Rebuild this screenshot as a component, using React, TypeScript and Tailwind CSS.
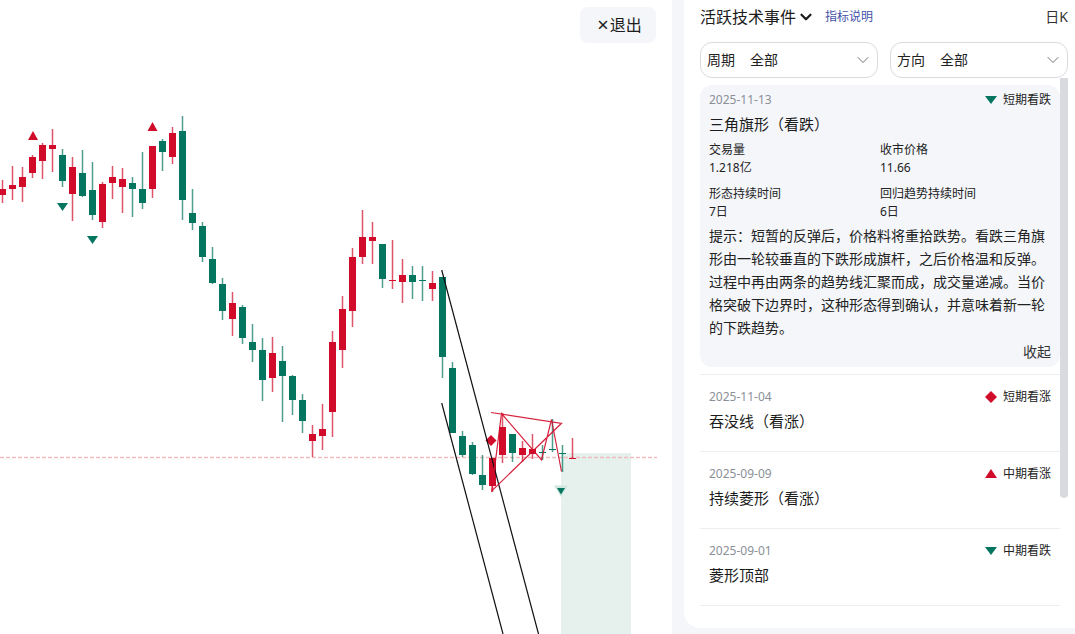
import React from 'react';
import { ChevronDown } from 'lucide-react';

const RED = '#d00c2a';
const GREEN = '#04765f';

// [wickTop, wickBottom, bodyTop, bodyBottom, up], one bar every 10px
const bars: [number, number, number, number, number][] = [
  [180, 203, 189, 195, 1], [166, 200, 185, 189, 1], [167, 202, 177, 187, 1], [155, 178, 157, 173, 1],
  [143, 179, 145, 161, 1], [129, 172, 145, 149, 1], [149, 187, 155, 181, 0], [157, 221, 167, 194, 1],
  [150, 197, 173, 196, 0], [162, 220, 190, 215, 0], [182, 228, 184, 222, 1], [166, 199, 177, 183, 1],
  [168, 213, 179, 187, 1], [177, 217, 183, 189, 0], [152, 209, 189, 203, 0], [146, 198, 146, 189, 1],
  [139, 171, 141, 152, 0], [127, 164, 133, 157, 1], [116, 220, 131, 200, 0], [189, 230, 213, 223, 0],
  [222, 262, 226, 257, 0], [247, 284, 259, 283, 0], [278, 320, 284, 311, 0], [292, 336, 303, 319, 1],
  [305, 344, 307, 338, 0], [324, 362, 342, 350, 0], [338, 401, 350, 380, 0], [337, 392, 353, 378, 1],
  [346, 422, 361, 376, 0], [375, 415, 376, 400, 0], [394, 433, 400, 421, 0], [425, 457, 434, 441, 1],
  [404, 450, 429, 436, 1], [331, 437, 342, 412, 1], [296, 368, 309, 350, 1], [248, 327, 257, 311, 1],
  [210, 264, 237, 257, 1], [222, 264, 237, 241, 1], [244, 288, 244, 279, 0], [240, 289, 280, 281, 1],
  [259, 303, 275, 282, 1], [266, 299, 275, 282, 0], [266, 301, 280, 281, 0], [271, 301, 283, 289, 1],
  [277, 378, 277, 357, 0], [362, 433, 368, 433, 0], [431, 457, 436, 455, 0], [442, 475, 445, 474, 0],
  [455, 490, 475, 485, 0], [458, 492, 458, 486, 1], [413, 463, 427, 455, 1], [434, 462, 434, 453, 0],
  [441, 462, 448, 455, 1], [434, 459, 449, 454, 1], [445, 460, 452, 453, 0], [419, 452, 449, 450, 0],
  [445, 472, 453, 454, 0], [438, 458, 458, 459, 1],
];

const Chart = () => (
  <svg width="672" height="634" viewBox="0 0 672 634" className="block">
    <rect x="561" y="453" width="70" height="181" fill="#e6f1ee" />
    <line x1="0" y1="457.5" x2="657" y2="457.5" stroke="#f0bcc0" strokeWidth="1.3" strokeDasharray="4 2" />
    {bars.map(([wt, wb, bt, bb, up], i) => {
      const x = 2.5 + i * 10;
      const color = up ? RED : GREEN;
      return (
        <g key={i} fill={color}>
          <rect x={x - 0.75} y={wt} width="1.5" height={wb - wt} opacity="0.7" />
          <rect x={x - 3.5} y={bt} width="7" height={bb - bt} />
        </g>
      );
    })}
    <polygon points="33,131 38,140 28,140" fill={RED} />
    <polygon points="152.5,122 157.5,131 147.5,131" fill={RED} />
    <polygon points="57,203 68,203 62.5,211" fill={GREEN} />
    <polygon points="87,236 98,236 92.5,244" fill={GREEN} />
    <polygon points="491,435 496.5,440.5 491,446 485.5,440.5" fill={RED} />
    <polygon points="554,485.5 568,485.5 561,497" fill="#cfe6e0" />
    <polygon points="557,488 565,488 561,494.5" fill={GREEN} />
    <line x1="441.7" y1="270" x2="538.5" y2="634" stroke="#111" strokeWidth="1.2" />
    <line x1="441.7" y1="403" x2="503" y2="634" stroke="#111" strokeWidth="1.2" />
    <polyline
      points="491,412.5 561.5,423.3 491.7,491 501.5,413.5 541.5,460 551.5,419.5 561.5,471.5"
      fill="none"
      stroke={RED}
      strokeOpacity="0.9"
      strokeWidth="1.2"
    />
  </svg>
);

const TagIcon = ({ kind }: { kind: 'down' | 'up' | 'diamond' }) => (
  <svg width="12" height="12" viewBox="0 0 12 12" className="shrink-0">
    {kind === 'down' && <polygon points="0,2 12,2 6,10" fill={GREEN} />}
    {kind === 'up' && <polygon points="6,1 12,10 0,10" fill={RED} />}
    {kind === 'diamond' && <polygon points="6,0 12,6 6,12 0,6" fill={RED} />}
  </svg>
);

const EventHead = ({ date, tag, kind }: { date: string; tag: string; kind: 'down' | 'up' | 'diamond' }) => (
  <div className="flex h-[18px] items-center justify-between text-xs leading-[18px]">
    <span className="text-[#8b8f97]">{date}</span>
    <span className="flex items-center gap-[6px] text-[#222]">
      <TagIcon kind={kind} />
      {tag}
    </span>
  </div>
);

const Stat = ({ label, value }: { label: string; value: string }) => (
  <div className="text-xs leading-[18px] text-[#222]">
    <div>{label}</div>
    <div>{value}</div>
  </div>
);

const Picker = ({ label }: { label: string }) => (
  <div className="flex h-9 flex-1 items-center justify-between rounded-xl border border-[#d9dbe0] pl-[6px] pr-1 text-sm text-[#222]">
    <span className="flex gap-[15px]">
      <span>{label}</span>
      <span>全部</span>
    </span>
    <ChevronDown size={20} strokeWidth={1} color="#555" />
  </div>
);

const rows: { date: string; tag: string; kind: 'down' | 'up' | 'diamond'; title: string }[] = [
  { date: '2025-11-04', tag: '短期看涨', kind: 'diamond', title: '吞没线（看涨）' },
  { date: '2025-09-09', tag: '中期看涨', kind: 'up', title: '持续菱形（看涨）' },
  { date: '2025-09-01', tag: '中期看跌', kind: 'down', title: '菱形顶部' },
];

export default function App() {
  return (
    <div
      className="flex h-[634px] w-[1075px] overflow-hidden bg-white text-[#1c1c1c]"
      style={{ fontFamily: '"Noto Sans", "Noto Sans CJK SC", sans-serif' }}
    >
      <div className="relative w-[672px] shrink-0">
        <Chart />
        <button className="absolute left-[580px] top-[7px] flex h-9 w-[76px] items-center justify-center rounded-lg bg-[#f4f6fa] pl-[3px] text-base">
          <span className="mr-px text-xl leading-none">×</span>
          退出
        </button>
      </div>

      <div className="flex-1 bg-[#f4f6fa] pb-[6px] pl-3">
        <div className="flex h-full flex-col overflow-hidden rounded-bl-2xl bg-white pl-4 pr-[7px]">
          <div className="mb-2 flex h-[34px] items-center justify-between">
            <div className="flex items-center">
              <span className="text-base">活跃技术事件</span>
              <ChevronDown size={18} strokeWidth={3} className="ml-px" />
              <span className="ml-[10px] text-xs text-[#3f51a8]">指标说明</span>
            </div>
            <span className="text-sm text-[#333]">日K</span>
          </div>

          <div className="flex gap-3">
            <Picker label="周期" />
            <Picker label="方向" />
          </div>

          <div className="flex min-h-0 flex-1">
            <div className="min-w-0 flex-1 overflow-hidden">
              <div className="border-b border-[#eceef0] py-[7px]">
                <div className="rounded-xl bg-[#f4f6fa] px-[9px] pb-[5px] pt-[6px]">
                  <EventHead date="2025-11-13" tag="短期看跌" kind="down" />
                  <div className="mt-[3px] text-[15px] leading-6">三角旗形（看跌）</div>
                  <div className="mt-[5px] grid grid-cols-2 gap-y-[8px]">
                    <Stat label="交易量" value="1.218亿" />
                    <Stat label="收市价格" value="11.66" />
                    <Stat label="形态持续时间" value="7日" />
                    <Stat label="回归趋势持续时间" value="6日" />
                  </div>
                  <p className="mt-[3px] text-sm leading-[23px] text-[#222]">
                    提示：短暂的反弹后，价格料将重拾跌势。看跌三角旗形由一轮较垂直的下跌形成旗杆，之后价格温和反弹。过程中再由两条的趋势线汇聚而成，成交量递减。当价格突破下边界时，这种形态得到确认，并意味着新一轮的下跌趋势。
                  </p>
                  <div className="mt-[3px] text-right text-sm leading-5 text-[#333]">收起</div>
                </div>
              </div>

              {rows.map(row => (
                <div key={row.date} className="border-b border-[#eceef0] px-[9px] pb-[18px] pt-[13px]">
                  <EventHead date={row.date} tag={row.tag} kind={row.kind} />
                  <div className="mt-[3px] text-[15px] leading-6">{row.title}</div>
                </div>
              ))}
            </div>

            <div className="w-2 shrink-0">
              <div className="h-[420px] rounded-b bg-[#d8dae0]" />
            </div>
          </div>
        </div>
      </div>
    </div>
  );
}
